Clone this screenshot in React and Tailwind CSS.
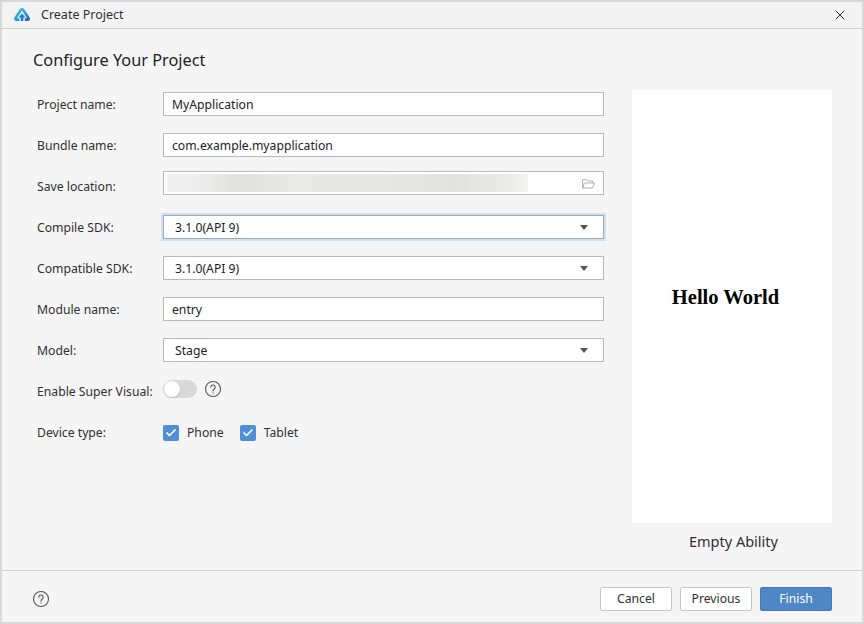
import { X, Check } from "lucide-react";

function Row({ label, children }) {
  return (
    <div className="flex items-start h-[25px]">
      <span className="w-[126px] shrink-0 pt-[3px] leading-[20px] text-[12.2px] text-[#303030]">{label}</span>
      {children}
    </div>
  );
}

function TextBox({ value }) {
  return (
    <div className="flex-1 h-[24px] bg-white border border-[#b9b9b9] pl-2 pt-[2px] flex items-center text-[12.2px] text-[#222]">
      {value}
    </div>
  );
}

function SelectBox({ value, focused }) {
  return (
    <div
      className={
        focused
          ? "flex-1 h-[24px] bg-white border border-[#a0a8b0] shadow-[0_0_0_2px_#cfe2f5] pl-[11px] pr-[15px] flex items-center justify-between text-[12.2px] text-[#222]"
          : "flex-1 h-[24px] bg-white border border-[#b9b9b9] pl-[11px] pr-[15px] flex items-center justify-between text-[12.2px] text-[#222]"
      }
    >
      <span className="pt-[2px]">{value}</span>
      <span className="w-0 h-0 border-l-[4px] border-r-[4px] border-t-[5px] border-l-transparent border-r-transparent border-t-[#555]" />
    </div>
  );
}

function HelpIcon() {
  return (
    <svg width="18" height="18" viewBox="0 0 18 18" fill="none" stroke="#555" strokeWidth="1.1">
      <circle cx="9" cy="9" r="7.5" />
      <path d="M6.8 7.2a2.2 2.2 0 1 1 3.5 1.8c-.8.5-1.3 1-1.3 1.9" strokeLinecap="round" />
      <circle cx="9" cy="12.9" r="0.6" fill="#555" stroke="none" />
    </svg>
  );
}

function CheckItem({ label }) {
  return (
    <div className="flex items-center gap-2">
      <span className="w-4 h-4 rounded-[2px] bg-[#4f8fd6] flex items-center justify-center">
        <Check size={12} strokeWidth={3.5} color="#fff" />
      </span>
      <span className="pt-[1px] text-[12.2px] text-[#303030]">{label}</span>
    </div>
  );
}

function Logo() {
  return (
    <svg width="18" height="16" viewBox="0 0 18 16" fill="none">
      <defs>
        <linearGradient id="lg1" x1="0" y1="0" x2="1" y2="1">
          <stop offset="0" stopColor="#3cc8d8" />
          <stop offset="0.55" stopColor="#2a9ce0" />
          <stop offset="1" stopColor="#1b62c4" />
        </linearGradient>
      </defs>
      <path d="M6.2 12.6H3.4Q1.7 12.6 2.6 11L7.6 3.2Q9 1.4 10.4 3.2L15.4 11Q16.3 12.6 14.6 12.6H11.8" stroke="url(#lg1)" strokeWidth="2.6" strokeLinejoin="round" />
      <path d="M9 6.6 L12.4 10.4 H10.3 V14 H7.7 V10.4 H5.6 Z" fill="#2379d8" />
    </svg>
  );
}

export default function App() {
  return (
    <div className="w-[864px] h-[624px] bg-[#f5f5f5] border-2 border-[#d9d9d9] flex flex-col font-['Noto_Sans',sans-serif] overflow-hidden">
      <div className="h-[27px] shrink-0 border-b border-[#d0d0d0] flex items-center pl-[11px] pr-[14px] bg-[#f3f3f3]">
        <Logo />
        <span className="ml-[10px] text-[12.5px] text-[#303030]">Create Project</span>
        <X size={16} className="ml-auto text-[#222]" strokeWidth={1.4} />
      </div>

      <div className="flex-1 flex flex-col pl-[31px] pr-[30px]">
        <h1 className="mt-[19px] h-[24px] text-[16.3px] leading-[24px] text-[#222]">Configure Your Project</h1>
        <div className="flex mt-[18px] justify-between">
          <div className="w-[571px] pl-1 flex flex-col gap-4 pt-[2px]">
            <Row label="Project name:"><TextBox value="MyApplication" /></Row>
            <Row label="Bundle name:"><TextBox value="com.example.myapplication" /></Row>
            <Row label="Save location:">
              <div className="flex-1 h-[24px] -mt-[3px] bg-white border border-[#b9b9b9] flex items-center pl-[3px] pr-[8px]">
                <div className="w-[361px] h-[18px] bg-[linear-gradient(90deg,#f0f0f0_0%,#ececec_10%,#e0e0de_20%,#e9e9e8_35%,#e8e8e6_55%,#e2e2df_80%,#ebebe9_95%,#f4f4f4_100%)]" />
                <svg className="ml-auto" width="13" height="11" viewBox="0 0 13 11" fill="none" stroke="#b0b0b0">
                  <path d="M.5 10V1.5h4l1 1.5h5V5M.5 10h10l2-5H2.5L.5 10Z" />
                </svg>
              </div>
            </Row>
            <Row label="Compile SDK:"><SelectBox value="3.1.0(API 9)" focused /></Row>
            <Row label="Compatible SDK:"><SelectBox value="3.1.0(API 9)" /></Row>
            <Row label="Module name:"><TextBox value="entry" /></Row>
            <Row label="Model:"><SelectBox value="Stage" /></Row>
            <Row label="Enable Super Visual:">
              <span className="w-[34px] h-[18px] mt-[1px] rounded-full bg-[#d9d9d9] flex items-center">
                <span className="w-4 h-4 ml-[1px] rounded-full bg-white shadow-sm" />
              </span>
              <span className="ml-[7px] mt-[1px] flex"><HelpIcon /></span>
            </Row>
            <Row label="Device type:">
              <div className="flex items-center gap-4 mt-[3px]">
                <CheckItem label="Phone" />
                <CheckItem label="Tablet" />
              </div>
            </Row>
          </div>
          <div className="w-[200px] flex flex-col items-center">
            <div className="w-[200px] h-[433px] bg-white flex items-center justify-center pb-[19px] pr-[13px] font-['Liberation_Serif',serif] font-bold text-[20.5px] text-black">
              Hello World
            </div>
            <span className="mt-[8px] pl-[3px] text-[14.5px] text-[#303030]">Empty Ability</span>
          </div>
        </div>
      </div>

      <div className="h-[52px] shrink-0 border-t border-[#d0d0d0] flex items-center justify-between pl-[30px] pr-[30px] pt-[4px]">
        <HelpIcon />
        <div className="flex gap-2">
          <button className="w-[72px] h-[24px] pt-[1px] bg-white border border-[#c4c4c4] rounded-[2px] text-[12.2px] text-[#303030]">Cancel</button>
          <button className="w-[72px] h-[24px] pt-[1px] bg-white border border-[#c4c4c4] rounded-[2px] text-[12.2px] text-[#303030]">Previous</button>
          <button className="w-[72px] h-[24px] pt-[1px] bg-[#4f87c6] border border-[#4578b5] rounded-[2px] text-[12.2px] text-white">Finish</button>
        </div>
      </div>
    </div>
  );
}
